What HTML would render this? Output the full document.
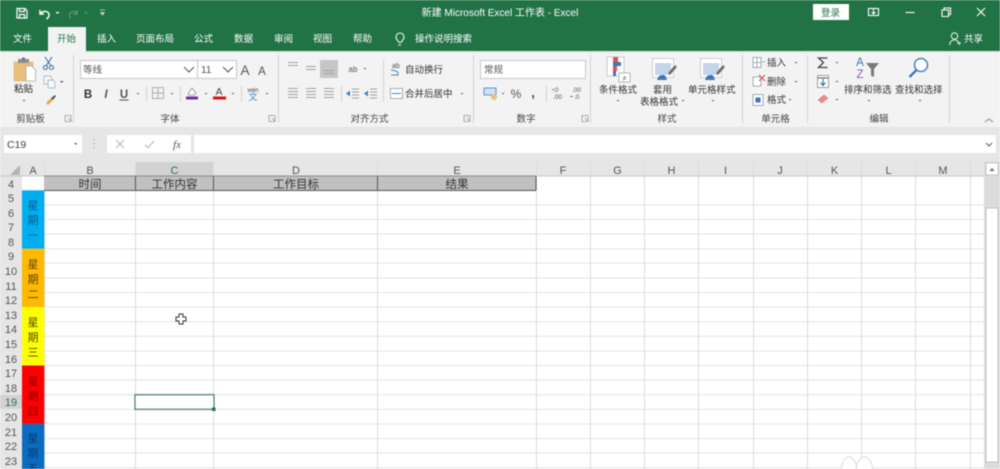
<!DOCTYPE html>
<html><head><meta charset="utf-8"><style>
html,body{margin:0;padding:0;background:#fff;width:1000px;height:469px;overflow:hidden}
svg{display:block;filter:blur(.45px)}
text{font-family:"Liberation Sans","Noto Sans CJK SC",sans-serif}
.t{font-size:9.5px;fill:#333}
.w{font-size:9.5px;fill:#fff}
.r{font-size:11px;fill:#555;text-anchor:middle}
.c{font-size:11px;fill:#555;text-anchor:middle}
.h{font-size:11.5px;fill:#333;text-anchor:middle}
.g{font-size:9.5px;fill:#444;text-anchor:middle}
.d{fill:#666}
</style></head><body>
<svg width="1000" height="469" viewBox="0 0 1000 469" xmlns="http://www.w3.org/2000/svg">
<!-- title bar -->
<rect width="1000" height="51" fill="#217346"/>
<rect x="48" y="27" width="38" height="25" fill="#f3f3f3"/>
<rect y="51" width="1000" height="76" fill="#f3f3f3"/>
<rect y="51" width="48" height="1.500" fill="#dfe8e2"/><rect x="86" y="51" width="914" height="1.500" fill="#dfe8e2"/>
<rect y="127" width="1000" height="35" fill="#e6e6e6"/>
<!-- QAT -->
<g fill="none" stroke="#fff" stroke-width="1.200">
<path d="M17 8.500h8l2 2v7.500h-10z"/><path d="M19.500 8.500v3h5v-3M19.500 18v-3.500h5V18"/>
<path d="M40 10v4h4" stroke-width="1.500"/><path d="M40.500 13.500c3-3.500 8.500-2.500 8.500 1.500 0 2-1 3-2.500 4" stroke-width="1.500"/>
<path d="M77 10v4h-4M76.500 13.500c-2-3-7-2.500-7 2 0 1.500.5 2.500 1.500 3" stroke="#5d9a78"/>
</g>
<path d="M55.500 12h4l-2 2z" fill="#fff"/><path d="M84.500 12h3l-1.500 2z" fill="#5d9a78"/>
<path d="M100.500 12.500h4l-2 2.500z" fill="#cfe0d6" stroke="#cfe0d6" stroke-width=".6"/><path d="M100 10h5" stroke="#cfe0d6" stroke-width=".7"/>
<text x="500" y="16" text-anchor="middle" style="font-size:10px;fill:#fff">新建 Microsoft Excel 工作表  -  Excel</text>
<rect x="813" y="4" width="36" height="16" fill="#fff"/>
<text x="821" y="16" style="font-size:9.500px;fill:#217346">登录</text>
<g fill="none" stroke="#fff" stroke-width="1.100">
<rect x="868.500" y="8.500" width="10" height="7"/><path d="M873.500 9v5M871.500 12l2 2 2-2" stroke-width="1"/>
<path d="M905.500 12.500h9"/>
<path d="M942 10h6.500v6.500H942zM944 10V8h6.500v6.500h-2"/>
<path d="M977 8l8 8M985 8l-8 8"/>
<circle cx="954.500" cy="36" r="3.200" stroke="#dcebe2"/><path d="M949.500 45c.5-3.500 2.500-5 5-5s4.500 1.500 5 5M957 43h4" stroke="#dcebe2"/>
<path d="M399 42.500c-1-2-3-3-3-5.500a4 4 0 0 1 8 0c0 2.500-2 3.500-3 5.500zM398 45h3" stroke="#eaf3ee"/>
</g>
<!-- tabs -->
<text class="w" x="13" y="42">文件</text>
<text x="57" y="42" style="font-size:9.500px;fill:#217346">开始</text>
<text class="w" x="97" y="42">插入</text>
<text class="w" x="136" y="42">页面布局</text>
<text class="w" x="194" y="42">公式</text>
<text class="w" x="234" y="42">数据</text>
<text class="w" x="274" y="42">审阅</text>
<text class="w" x="313" y="42">视图</text>
<text class="w" x="353" y="42">帮助</text>
<text class="w" x="415" y="42">操作说明搜索</text>
<text class="w" x="964" y="42">共享</text>
<!-- separators -->
<g fill="#d4d4d4">
<rect x="73" y="55" width="1" height="68"/><rect x="278" y="55" width="1" height="68"/><rect x="473" y="55" width="1" height="68"/><rect x="590" y="55" width="1" height="68"/><rect x="742" y="55" width="1" height="68"/><rect x="807" y="55" width="1" height="68"/><rect x="949" y="55" width="1" height="68"/>
<rect x="146" y="86" width="1" height="16"/><rect x="180" y="86" width="1" height="16"/><rect x="241" y="86" width="1" height="16"/><rect x="341" y="86" width="1" height="16"/><rect x="383" y="60" width="1" height="42"/><rect x="546" y="86" width="1" height="16"/>
</g>
<!-- clipboard -->
<rect x="14" y="62" width="19" height="19" fill="#e9bf7b" stroke="#d6a864" stroke-width=".5"/>
<rect x="18" y="59" width="11" height="4" fill="#8b8f95"/><rect x="22" y="57.500" width="3" height="3" fill="#777"/>
<path d="M26 66h5.500l4 4v11H26z" fill="#fff" stroke="#aaa" stroke-width=".8"/>
<text x="14" y="92" style="font-size:9.500px;fill:#222">粘贴</text>
<path d="M22.500 100h3l-1.500 1.500z" fill="#666"/>
<g fill="none" stroke="#3f6f9e" stroke-width="1.100"><path d="M45 57l6 9M52 57l-6 9"/><circle cx="45.500" cy="67.500" r="2"/><circle cx="51.500" cy="67.500" r="2"/></g>
<g fill="#f6f8fa" stroke="#a9bccf" stroke-width=".9"><path d="M44 76h6l2 2v6h-8z"/><path d="M48 80h5l2 2v6h-7z"/></g>
<path d="M60 81h3.500l-1.800 2z" fill="#555"/>
<path d="M46 103l5-5 2 2-5 5z" fill="#e4a848"/><path d="M51 98l4-3 1 1-3 4z" fill="#555"/>
<text class="g" x="30.500" y="122">剪贴板</text>
<!-- launchers -->
<g fill="none" stroke="#999" stroke-width=".8">
<path d="M65 115.500h6v6h-6zM68 118l3 3"/><path d="M269 115.500h6v6h-6zM272 118l3 3"/><path d="M464 115.500h6v6h-6zM467 118l3 3"/><path d="M582 115.500h6v6h-6zM585 118l3 3"/>
</g>
<!-- font -->
<rect x="80.500" y="60.500" width="156" height="18" fill="#fff" stroke="#c6c6c6"/>
<rect x="197" y="60.500" width="1" height="18" fill="#c6c6c6"/>
<text x="83" y="73" style="font-size:9.500px;fill:#555">等线</text>
<text x="201" y="73" style="font-size:10px;fill:#555">11</text>
<g fill="none" stroke="#555" stroke-width="1"><path d="M184 67l5 5 5-5M223 67l5 5 5-5M571 67l5 5 5-5"/></g>
<text x="245" y="75" text-anchor="middle" style="font-size:13.500px;fill:#555">A</text>
<text x="262" y="75" text-anchor="middle" style="font-size:11.500px;fill:#555">A</text>
<text x="88" y="98" text-anchor="middle" style="font-size:11.500px;font-weight:bold;fill:#333">B</text>
<text x="106" y="98" text-anchor="middle" style="font-size:11.500px;font-style:italic;font-weight:bold;fill:#555">I</text>
<text x="124" y="98" text-anchor="middle" style="font-size:11.500px;font-weight:bold;fill:#555">U</text><path d="M119.500 100h9" stroke="#555"/>
<g class="d"><path d="M136.500 93h3l-1.500 1.500zM170.500 93h3l-1.500 1.500zM204.500 93h3l-1.500 1.500zM231.500 93h3l-1.500 1.500zM265.500 93h3l-1.500 1.500zM363.500 68h3l-1.500 1.500zM460.500 93h3l-1.500 1.500zM501.500 93h3l-1.500 1.500zM794.500 62h3l-1.500 1.500zM794.500 81h3l-1.500 1.500zM788.500 99h3l-1.500 1.500zM835.500 62h3l-1.500 1.500zM835.500 81h3l-1.500 1.500zM835.500 99h3l-1.500 1.500zM616.500 100h3l-1.500 1.500zM681.500 100h3l-1.500 1.500zM711.500 100h3l-1.500 1.500zM867.500 100h3l-1.500 1.500zM918.500 100h3l-1.500 1.500z"/></g>
<g fill="none" stroke="#aaa" stroke-width=".9"><rect x="152.500" y="87.500" width="11" height="11"/><path d="M158 88v10M153 93h10"/></g>
<path d="M188 94l4-6 4 5-2 2h-5z" fill="#fff" stroke="#8a8a8a" stroke-width=".8"/><rect x="186" y="96.500" width="12" height="3" fill="#7030a0"/>
<text x="219" y="95" text-anchor="middle" style="font-size:10.500px;fill:#444">A</text><rect x="213" y="96.500" width="13" height="3" fill="#e01010"/>
<text x="253" y="92" text-anchor="middle" style="font-size:6px;fill:#444">wén</text><text x="253" y="100" text-anchor="middle" style="font-size:9px;fill:#3d7fc4">文</text>
<text class="g" x="170" y="122">字体</text>
<!-- align -->
<rect x="320" y="60" width="18" height="18" fill="#c6c6c6"/>
<g stroke="#a0a0a0" stroke-width="1" fill="none">
<path d="M288 62.500h10M288 65.500h10M306 66.500h10M306 69.500h10M324 70.500h10M324 73.500h10"/>
<path d="M288 88.500h10M288 91.500h10M288 94.500h10M288 97.500h10M306 88.500h10M306 91.500h10M306 94.500h10M306 97.500h10M324 88.500h10M324 91.500h10M324 94.500h10M324 97.500h10"/>
<path d="M352 89h7M352 92h7M352 95h7M352 98h7M370 89h7M370 92h7M370 95h7M370 98h7"/>
</g>
<path d="M346 93.500l4-3v6z" fill="#3f83c7"/><path d="M364 93.500l4-3v6z" fill="#3f83c7"/>
<text x="353" y="72" text-anchor="middle" style="font-size:8px;fill:#555">ab</text>
<text x="392" y="68" style="font-size:7px;fill:#555">ab</text>
<path d="M391 70c6 1 8 2 7 5h-5" fill="none" stroke="#3f83c7" stroke-width=".9"/><path d="M391 75h2" stroke="#777"/>
<text x="405" y="73" class="t">自动换行</text>
<rect x="390.500" y="88.500" width="12" height="10" fill="#fff" stroke="#9a9a9a" stroke-width=".8"/><path d="M392 93.500h9" stroke="#3f83c7"/>
<text x="405" y="97" class="t">合并后居中</text>
<text class="g" x="369.500" y="122">对齐方式</text>
<!-- number -->
<rect x="480.500" y="60.500" width="105" height="18" fill="#fff" stroke="#c6c6c6"/>
<text x="484" y="73" style="font-size:9.500px;fill:#555">常规</text>
<rect x="484" y="88" width="12" height="7" fill="#cfe1f2" stroke="#3f83c7" stroke-width=".8"/><circle cx="494" cy="97" r="3" fill="#e9bf7b"/>
<text x="516" y="98" text-anchor="middle" style="font-size:12px;fill:#555">%</text>
<text x="533" y="97" text-anchor="middle" style="font-size:13px;font-weight:bold;fill:#444">,</text>
<text x="553" y="92" style="font-size:6.500px;fill:#555">.0</text><text x="553" y="99" style="font-size:6.500px;fill:#555">.00</text><path d="M554 89.500h-2" stroke="#3f83c7"/>
<text x="572" y="92" style="font-size:6.500px;fill:#555">.00</text><text x="574" y="99" style="font-size:6.500px;fill:#555">.0</text><path d="M570 96.500h3" stroke="#3f83c7"/>
<text class="g" x="526" y="122">数字</text>
<!-- styles -->
<g>
<rect x="607" y="57" width="17" height="19" fill="#fff" stroke="#b5b5b5" stroke-width=".7"/>
<rect x="613" y="57" width="5" height="5" fill="#d9534f"/><rect x="613" y="62" width="8" height="4" fill="#3f78b5"/><rect x="613" y="66" width="4" height="5" fill="#d9534f"/><rect x="613" y="71" width="3" height="5" fill="#3f78b5"/>
<rect x="619" y="73" width="11" height="9" fill="#fff" stroke="#999" stroke-width=".7"/>
<text x="624.500" y="80.500" text-anchor="middle" style="font-size:7px;fill:#555">≠</text>
</g>
<text class="t" x="599" y="93">条件格式</text>
<rect x="652.500" y="58.500" width="21" height="19" fill="#fff" stroke="#bcbcbc" stroke-width=".7"/>
<rect x="655" y="63" width="16" height="12" fill="#c6d6ea"/>
<path d="M657 80c1-4 3-5 6-5s3 3 4 5z" fill="#3f78b5"/>
<path d="M668 73l7-8 2 2-7 8z" fill="#7a6a62"/>
<text class="t" x="653" y="93">套用</text>
<text class="t" x="640" y="105">表格格式</text>
<rect x="700.500" y="58.500" width="21" height="19" fill="#fff" stroke="#bcbcbc" stroke-width=".7"/>
<rect x="703" y="63" width="16" height="12" fill="#c6d6ea"/>
<path d="M705 80c1-4 3-5 6-5s3 3 4 5z" fill="#3f78b5"/>
<path d="M716 73l7-8 2 2-7 8z" fill="#7a6a62"/>
<text class="t" x="688" y="93">单元格样式</text>
<text class="g" x="667" y="122">样式</text>
<!-- cells -->
<g fill="#fff" stroke="#8a9aa8" stroke-width=".8">
<rect x="753" y="57.500" width="8" height="10"/><path d="M753 62.500h8M757 57.500v10"/><path d="M762 62h3" stroke="#999"/>
<rect x="753" y="77" width="8" height="9"/>
<rect x="753" y="94.500" width="10" height="11"/>
</g>
<path d="M759 75l6 6M765 75l-6 6" stroke="#d9534f" stroke-width="1.100"/>
<rect x="755.500" y="97.500" width="5" height="5" fill="#3f78b5"/>
<text class="t" x="767" y="66">插入</text>
<text class="t" x="767" y="85">删除</text>
<text class="t" x="767" y="103">格式</text>
<text class="g" x="775.500" y="122">单元格</text>
<!-- editing -->
<path d="M827.500 58h-9l5 4.500-5 5h9" fill="none" stroke="#444" stroke-width="1.300"/>
<rect x="817.500" y="75.500" width="11" height="12" fill="#fff" stroke="#888" stroke-width=".8"/><path d="M818 78h10" stroke="#555"/><path d="M823 79v6M820.500 82.500l2.500 3 2.500-3" fill="none" stroke="#2e6fb5" stroke-width="1.100"/>
<path d="M818 100l6-5 4 3-6 5z" fill="#e88a8a" stroke="#d86a6a" stroke-width=".5"/>
<text x="860" y="66" text-anchor="middle" style="font-size:11.500px;fill:#3f78b5">A</text>
<text x="860" y="78" text-anchor="middle" style="font-size:11.500px;fill:#8a5cb0">Z</text>
<path d="M866 63h13l-5 6v8l-3-1.500V69z" fill="#7a7a7a"/>
<circle cx="921" cy="65" r="6.500" fill="#fff" stroke="#3f83c7" stroke-width="1.500"/><path d="M916.500 70l-7 7" stroke="#2e6fb5" stroke-width="2.200"/>
<text class="t" x="844" y="93">排序和筛选</text>
<text class="t" x="895" y="93">查找和选择</text>
<text class="g" x="879" y="122">编辑</text>
<path d="M985 122l4-3 4 3" fill="none" stroke="#888"/>
<!-- formula bar -->
<rect x="4" y="135" width="78" height="18" fill="#fff"/>
<text x="7" y="148" style="font-size:10.500px;fill:#444">C19</text>
<path d="M74 143h3.500l-1.800 2z" fill="#666"/>
<path d="M94 139v1M94 143v1M94 147v1" stroke="#999" stroke-width="1.200"/>
<rect x="107" y="135" width="84" height="18" fill="#fff"/>
<path d="M116 140l8 8M124 140l-8 8" stroke="#b8b8b8" stroke-width="1.100"/>
<path d="M145 145l3 3 6-7" fill="none" stroke="#b8b8b8" stroke-width="1.100"/>
<text x="177" y="148" text-anchor="middle" style="font-family:'Liberation Serif',serif;font-size:11px;font-style:italic;fill:#555">fx</text>
<rect x="194" y="135" width="802" height="18" fill="#fff"/>
<path d="M986 143l3 3 3-3" fill="none" stroke="#666" stroke-width="1.200"/>
<!-- sheet -->
<rect y="162" width="984" height="14" fill="#e6e6e6"/>
<rect y="176" width="22" height="293" fill="#e6e6e6"/>
<rect x="135" y="162" width="78.500" height="14" fill="#d2d2d2"/>
<rect y="394.700" width="22" height="14.600" fill="#d2d2d2"/>
<rect x="22" y="176" width="962" height="293" fill="#fff"/>
<path d="M20 165v10h-10z" fill="#b4b4b4"/>
<g fill="none">
<path stroke="#e4e4e4" d="M0 205h984M0 219.500h984M0 234h984M0 248.700h984M0 263.300h984M0 278h984M0 292.500h984M0 307h984M0 321.700h984M0 336.300h984M0 351h984M0 365.500h984M0 380h984M0 394.700h984M0 409.300h984M0 424h984M0 438.500h984M0 453h984M0 467.700h984"/>
<path stroke="#dcdcdc" d="M44.500 162v307M135.500 162v307M213.500 162v307M377.500 162v307M536.500 162v307M590.500 162v307M644.500 162v307M698.500 162v307M753.500 162v307M807.500 162v307M861.500 162v307M915.500 162v307M970.500 162v307M22.500 162v14"/>
</g>
<path d="M0 176h984" stroke="#c8c8c8"/>
<!-- row 4 -->
<rect x="44" y="176" width="492" height="14.500" fill="#c0c0c0"/>
<path d="M44 190.500h492M135.500 176v14.500M213.500 176v14.500M377.500 176v14.500M536 176v14.500" stroke="#555" stroke-width="1"/>
<path d="M44 176h492" stroke="#8a8a8a"/>
<text class="h" x="90" y="188">时间</text><text class="h" x="174.500" y="188">工作内容</text><text class="h" x="296" y="188">工作目标</text><text class="h" x="457" y="188">结果</text>
<!-- colour cells -->
<rect x="22" y="190.300" width="22.300" height="58.400" fill="#00aef0"/>
<rect x="22" y="248.700" width="22.300" height="58.400" fill="#ffb900"/>
<rect x="22" y="307.100" width="22.300" height="58.400" fill="#ffff00"/>
<rect x="22" y="365.500" width="22.300" height="58.400" fill="#ff0000"/>
<rect x="22" y="423.900" width="22.300" height="45.100" fill="#0a6cc0"/>
<g text-anchor="middle" style="font-size:11px">
<g fill="#0a5c8a"><text x="33" y="209">星</text><text x="33" y="224">期</text><text x="33" y="239">一</text></g>
<g fill="#5a4200"><text x="33" y="268">星</text><text x="33" y="283">期</text><text x="33" y="298">二</text></g>
<g fill="#4a4a00"><text x="33" y="326">星</text><text x="33" y="341">期</text><text x="33" y="356">三</text></g>
<g fill="#8a0000"><text x="33" y="385">星</text><text x="33" y="400">期</text><text x="33" y="415">四</text></g>
<g fill="#063a70"><text x="33" y="442">星</text><text x="33" y="457">期</text><text x="33" y="472">五</text></g>
</g>
<!-- col letters -->
<text class="c" x="33" y="174">A</text><text class="c" x="90" y="174">B</text><text class="c" x="174.500" y="174" style="fill:#2f6f4c">C</text><text class="c" x="296" y="174">D</text><text class="c" x="457" y="174">E</text><text class="c" x="563" y="174">F</text><text class="c" x="617.500" y="174">G</text><text class="c" x="671.500" y="174">H</text><text class="c" x="725.500" y="174">I</text><text class="c" x="780" y="174">J</text><text class="c" x="834.500" y="174">K</text><text class="c" x="888.500" y="174">L</text><text class="c" x="943" y="174">M</text>
<!-- row numbers -->
<text class="r" x="11" y="188">4</text><text class="r" x="11" y="202">5</text><text class="r" x="11" y="217">6</text><text class="r" x="11" y="231">7</text><text class="r" x="11" y="246">8</text><text class="r" x="11" y="260">9</text><text class="r" x="11" y="275">10</text><text class="r" x="11" y="290">11</text><text class="r" x="11" y="304">12</text><text class="r" x="11" y="319">13</text><text class="r" x="11" y="333">14</text><text class="r" x="11" y="348">15</text><text class="r" x="11" y="363">16</text><text class="r" x="11" y="377">17</text><text class="r" x="11" y="392">18</text><text class="r" x="11" y="406" style="fill:#2f6f4c">19</text><text class="r" x="11" y="421">20</text><text class="r" x="11" y="436">21</text><text class="r" x="11" y="450">22</text><text class="r" x="11" y="465">23</text>
<!-- selection -->
<rect x="135" y="394.700" width="79" height="14.600" fill="#fff" stroke="#3f7f5f" stroke-width="1.200"/>
<rect x="212" y="407.500" width="3.500" height="3.500" fill="#217346"/>
<!-- cursor -->
<path d="M179 314h4v3h3v4h-3v3h-4v-3h-3v-4h3z" fill="#fff" stroke="#333" stroke-width="1"/>
<!-- scrollbar -->
<rect x="984" y="162" width="16" height="307" fill="#dcdcdc"/>
<rect x="986" y="163" width="12" height="12" fill="#fff" stroke="#aaa" stroke-width=".6"/>
<path d="M989.500 171l2.500-3 2.500 3z" fill="#666"/>
<rect x="986" y="208" width="12" height="254" fill="#fff" stroke="#b8b8b8" stroke-width=".8"/>
<!-- watermark -->
<g fill="#fff" stroke="#dcdcdc" stroke-width="1"><ellipse cx="849" cy="472" rx="8" ry="15"/><ellipse cx="864.500" cy="472" rx="8.500" ry="15"/></g>
</svg>
</body></html>
